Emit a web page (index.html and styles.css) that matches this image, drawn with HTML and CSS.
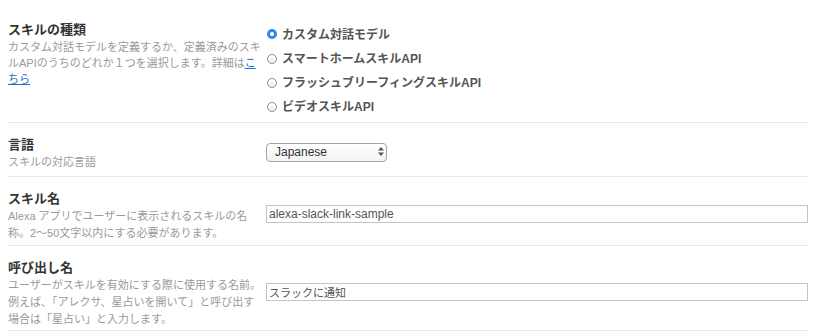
FILE: index.html
```html
<!DOCTYPE html>
<html lang="ja">
<head>
<meta charset="utf-8">
<title>スキル情報</title>
<link rel="stylesheet" href="styles.css">
</head>
<body>
<div class="form">
  <div class="row row-type">
    <div class="label">
      <div class="title">スキルの種類</div>
      <div class="desc desc-tight">カスタム対話モデルを定義するか、定義済みのスキルAPIのうちのどれか１つを選択します。詳細は<a href="#" class="link">こちら</a></div>
    </div>
    <div class="field field-top">
      <ul class="radios">
        <li class="radio"><span class="dot dot-checked"></span>カスタム対話モデル</li>
        <li class="radio"><span class="dot"></span>スマートホームスキルAPI</li>
        <li class="radio"><span class="dot"></span>フラッシュブリーフィングスキルAPI</li>
        <li class="radio"><span class="dot"></span>ビデオスキルAPI</li>
      </ul>
    </div>
  </div>
  <div class="row row-lang">
    <div class="label">
      <div class="title">言語</div>
      <div class="desc">スキルの対応言語</div>
    </div>
    <div class="field">
      <div class="select-wrap">
        <select class="select"><option>Japanese</option></select>
        <svg class="select-arrows" width="6" height="9" viewBox="0 0 6 9"><path d="M3 0 L6 3.5 L0 3.5 Z M0 5.5 L6 5.5 L3 9 Z" fill="#555"/></svg>
      </div>
    </div>
  </div>
  <div class="row">
    <div class="label">
      <div class="title">スキル名</div>
      <div class="desc">Alexa アプリでユーザーに表示されるスキルの名<br>称。2〜50文字以内にする必要があります。</div>
    </div>
    <div class="field">
      <input class="input" type="text" value="alexa-slack-link-sample">
    </div>
  </div>
  <div class="row row-invoke">
    <div class="label">
      <div class="title">呼び出し名</div>
      <div class="desc">ユーザーがスキルを有効にする際に使用する名前。例えば、「アレクサ、星占いを開いて」と呼び出す場合は「星占い」と入力します。</div>
    </div>
    <div class="field">
      <input class="input input-ja" type="text" value="スラックに通知">
    </div>
  </div>
</div>
</body>
</html>
```

FILE: styles.css
```css
html, body {
  margin: 0;
  padding: 0;
  background: #ffffff;
}
body {
  padding: 8px;
  font-family: "Liberation Sans", "Noto Sans CJK JP", sans-serif;
  color: #333;
}
.form {
  width: 800px;
}
.row {
  display: grid;
  grid-template-columns: 256px 1fr;
  column-gap: 2px;
  padding: 13px 0 3px;
  border-bottom: 1px solid #e8e8e8;
}
.row-type {
  padding-bottom: 5px;
}
.row-lang {
  padding-bottom: 5px;
}
.row-invoke {
  padding-bottom: 2px;
}
.label {
  min-width: 0;
}
.title {
  font-size: 13px;
  line-height: 18px;
  font-weight: bold;
  color: #333;
}
.desc {
  font-size: 11px;
  line-height: 17px;
  color: #9a9a9a;
}
.desc-tight {
  line-height: 16px;
}
.link {
  color: #1a6fc9;
  text-decoration: underline;
}
.field {
  align-self: center;
  margin-bottom: 4px;
  display: flex;
}
.field-top {
  align-self: start;
  margin-bottom: 0;
}
.radios {
  list-style: none;
  margin: 0;
  padding: 0;
}
.radio {
  display: flex;
  align-items: center;
  height: 24px;
  font-size: 12px;
  font-weight: bold;
  color: #555;
}
.dot {
  box-sizing: border-box;
  width: 10px;
  height: 10px;
  border-radius: 50%;
  border: 1px solid #8e8e8e;
  background: linear-gradient(#ffffff, #eeeeee);
  margin: 3px 5px 0 1px;
  flex: none;
}
.dot-checked {
  border: none;
  background: radial-gradient(circle, #ffffff 0 1.8px, #2f86f4 2.3px);
  margin-top: 1px;
}
.select-wrap {
  position: relative;
  width: 121px;
  height: 19px;
}
.select {
  -webkit-appearance: none;
  appearance: none;
  box-sizing: border-box;
  width: 121px;
  height: 19px;
  margin: 0;
  padding: 0 0 0 8px;
  border: 1px solid #a4a4a4;
  border-radius: 4px;
  background: linear-gradient(#ffffff, #f3f3f3);
  font-family: "Liberation Sans", "Noto Sans CJK JP", sans-serif;
  font-size: 12px;
  color: #333;
  line-height: 17px;
}
.select-arrows {
  position: absolute;
  right: 3px;
  top: 5px;
  pointer-events: none;
}
.input {
  box-sizing: border-box;
  width: 542px;
  height: 18px;
  margin: 0;
  padding: 0 2px;
  border: 1px solid #c4c4c4;
  border-radius: 0;
  font-family: "Liberation Sans", "Noto Sans CJK JP", sans-serif;
  font-size: 12px;
  color: #555;
  background: #fff;
  outline: none;
}
.input-ja {
  font-size: 11px;
}
```
